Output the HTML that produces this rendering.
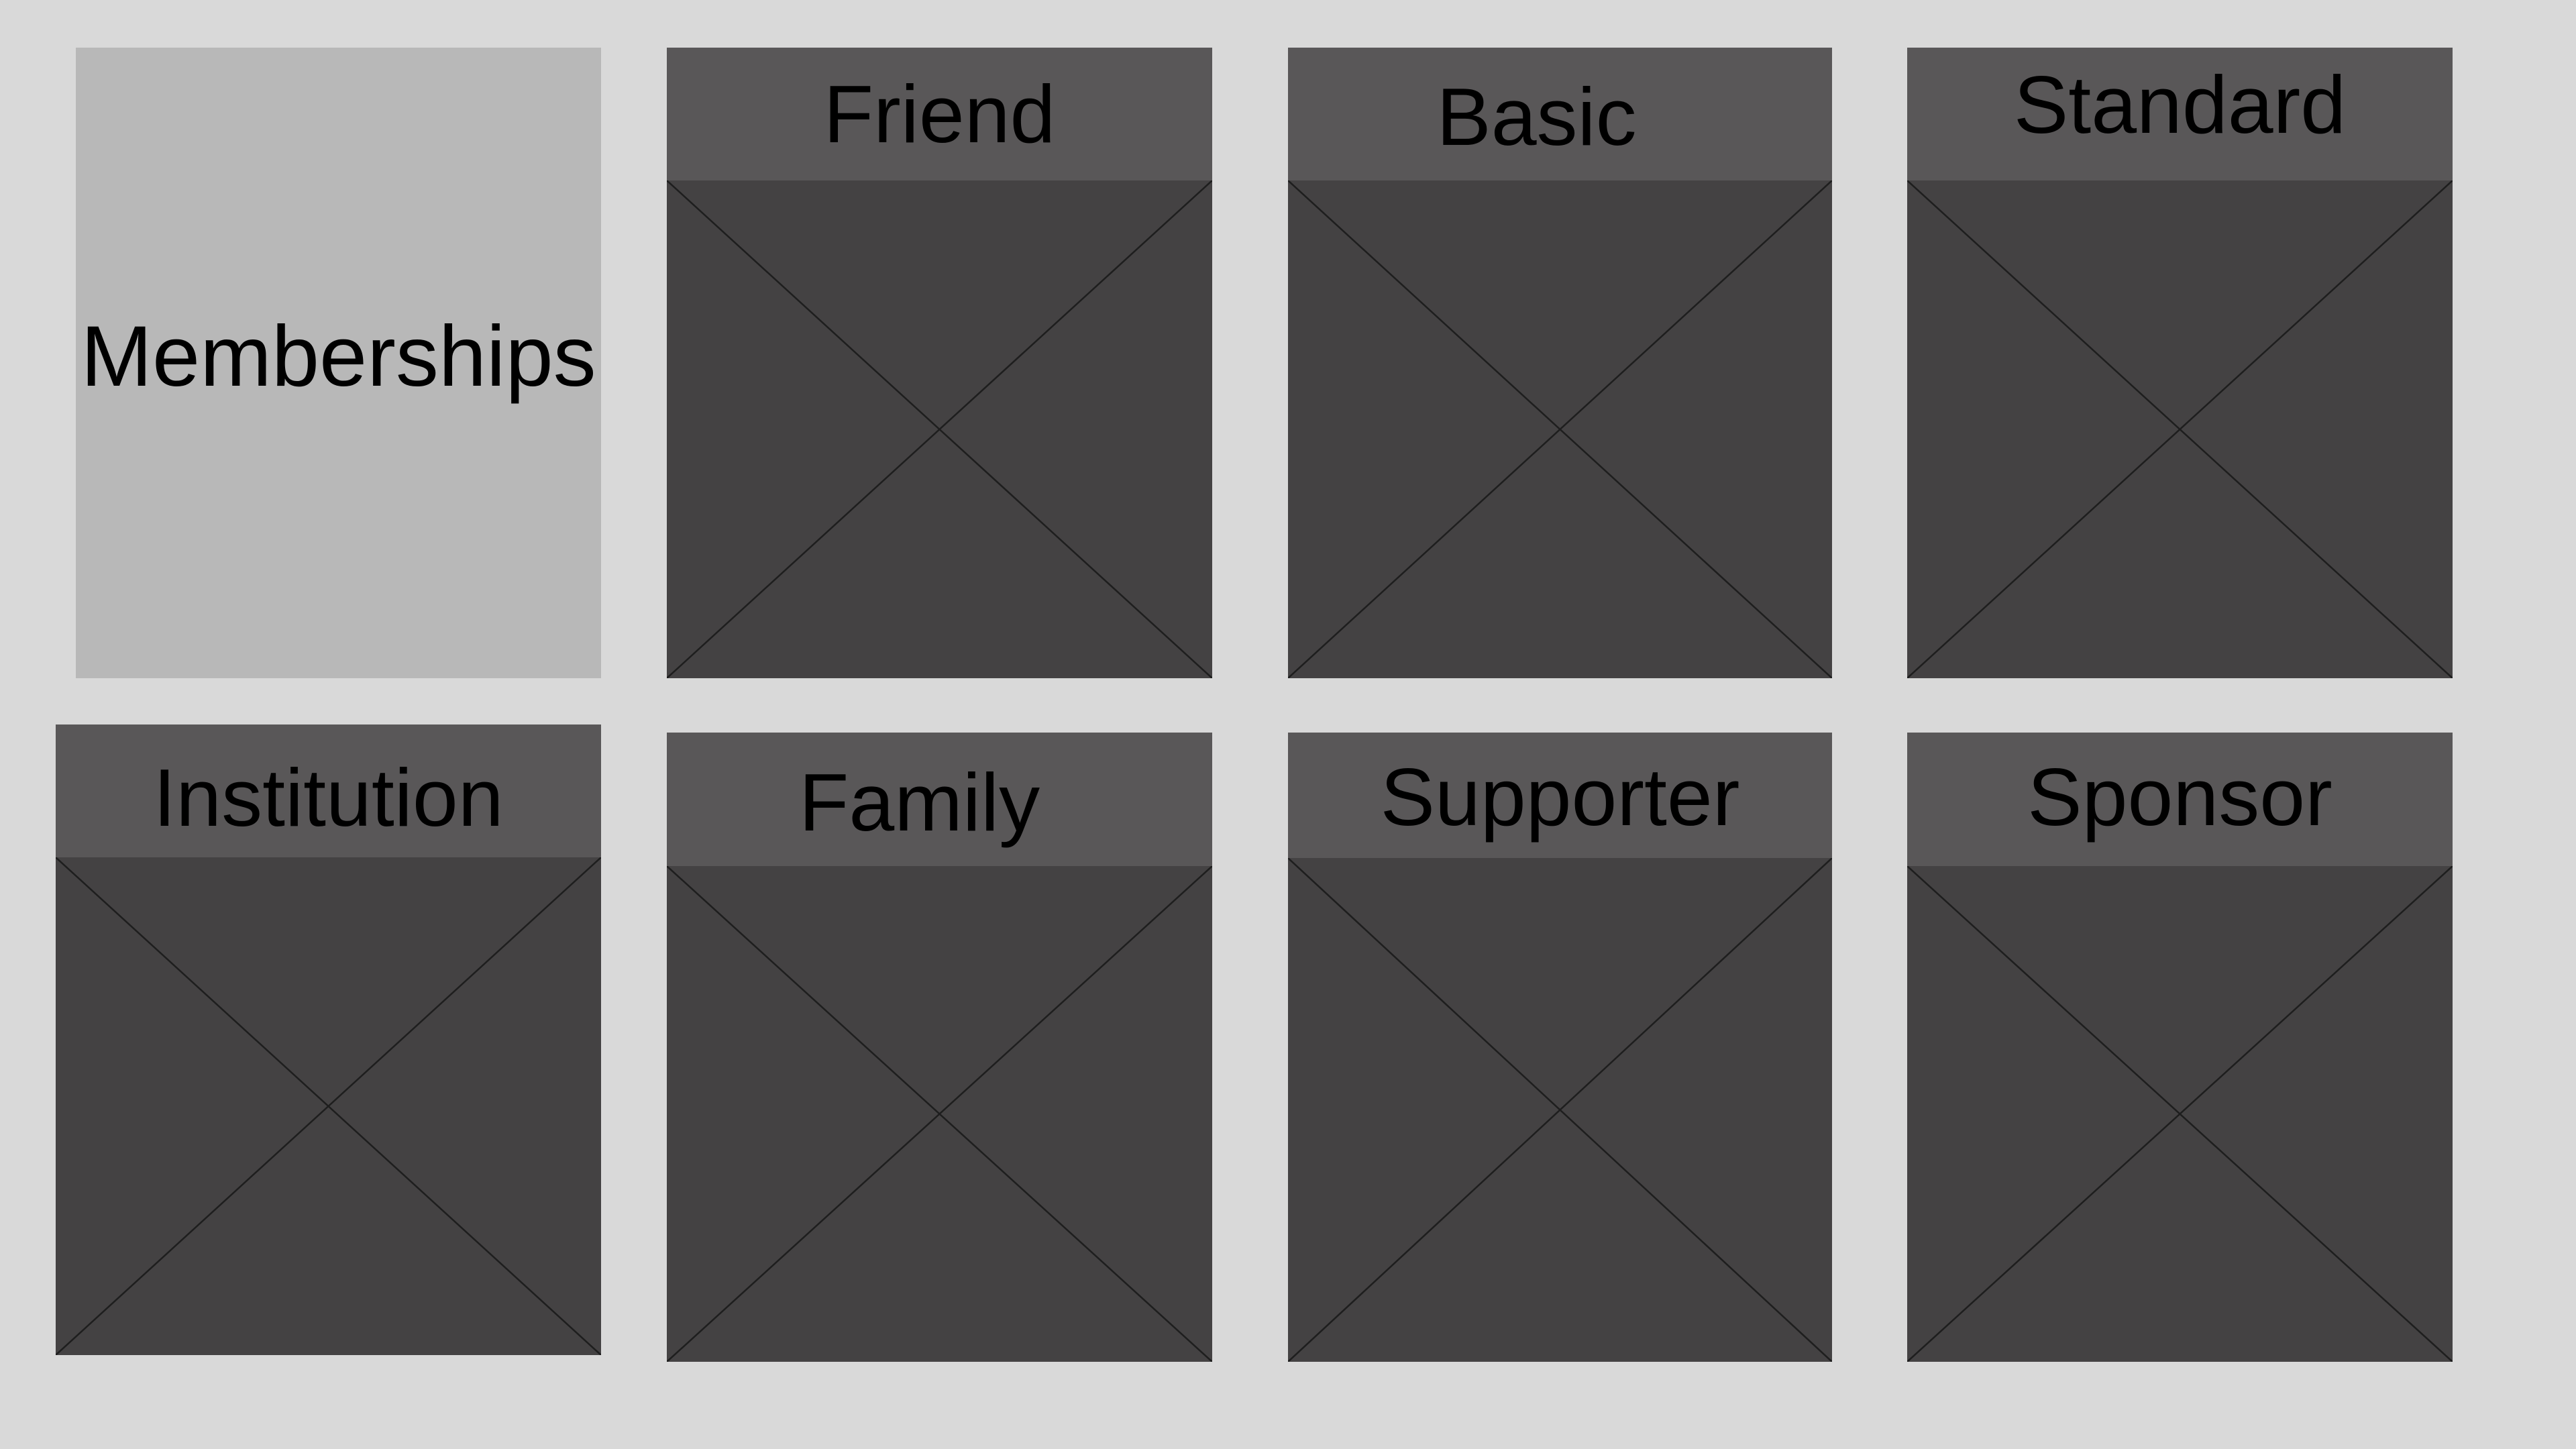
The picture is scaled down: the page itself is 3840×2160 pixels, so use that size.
<!DOCTYPE html>
<html><head><meta charset="utf-8"><style>
html,body{margin:0;padding:0}
body{width:3840px;height:2160px;background:#d9d9d9;position:relative;overflow:hidden;font-family:"Liberation Sans",sans-serif}
.b{position:absolute;background:#444243}
.h{position:absolute;left:0;top:0;width:100%;background:#595758;color:#000;text-align:center;font-size:122px;box-sizing:border-box}
svg{position:absolute;left:0;width:100%}
.m{position:absolute;left:113px;top:71px;width:783px;height:920px;padding-bottom:20px;background:#b8b8b8;display:flex;align-items:center;justify-content:center;font-size:128px;color:#000}
</style></head><body>
<div class="m">Memberships</div>

<div class="b" style="left:994px;top:71px;width:813px;height:940px">
<div class="h" style="height:198px;line-height:198px">Friend</div>
<svg style="top:198px;height:742px" viewBox="0 0 100 100" preserveAspectRatio="none"><path d="M0 0L100 100M100 0L0 100" stroke="#1e1e1e" stroke-width="2.5" vector-effect="non-scaling-stroke" fill="none"/></svg></div>

<div class="b" style="left:1920px;top:71px;width:811px;height:940px">
<div class="h" style="height:198px;line-height:206px;padding-right:70px">Basic</div>
<svg style="top:198px;height:742px" viewBox="0 0 100 100" preserveAspectRatio="none"><path d="M0 0L100 100M100 0L0 100" stroke="#1e1e1e" stroke-width="2.5" vector-effect="non-scaling-stroke" fill="none"/></svg></div>

<div class="b" style="left:2843px;top:71px;width:813px;height:940px">
<div class="h" style="height:198px;line-height:170px">Standard</div>
<svg style="top:198px;height:742px" viewBox="0 0 100 100" preserveAspectRatio="none"><path d="M0 0L100 100M100 0L0 100" stroke="#1e1e1e" stroke-width="2.5" vector-effect="non-scaling-stroke" fill="none"/></svg></div>

<div class="b" style="left:83px;top:1080px;width:813px;height:940px">
<div class="h" style="height:198px;line-height:218px">Institution</div>
<svg style="top:198px;height:742px" viewBox="0 0 100 100" preserveAspectRatio="none"><path d="M0 0L100 100M100 0L0 100" stroke="#1e1e1e" stroke-width="2.5" vector-effect="non-scaling-stroke" fill="none"/></svg></div>

<div class="b" style="left:994px;top:1092px;width:813px;height:938px">
<div class="h" style="height:199px;line-height:208px;padding-right:60px">Family</div>
<svg style="top:199px;height:739px" viewBox="0 0 100 100" preserveAspectRatio="none"><path d="M0 0L100 100M100 0L0 100" stroke="#1e1e1e" stroke-width="2.5" vector-effect="non-scaling-stroke" fill="none"/></svg></div>

<div class="b" style="left:1920px;top:1092px;width:811px;height:938px">
<div class="h" style="height:187px;line-height:192px">Supporter</div>
<svg style="top:187px;height:751px" viewBox="0 0 100 100" preserveAspectRatio="none"><path d="M0 0L100 100M100 0L0 100" stroke="#1e1e1e" stroke-width="2.5" vector-effect="non-scaling-stroke" fill="none"/></svg></div>

<div class="b" style="left:2843px;top:1092px;width:813px;height:938px">
<div class="h" style="height:199px;line-height:192px">Sponsor</div>
<svg style="top:199px;height:739px" viewBox="0 0 100 100" preserveAspectRatio="none"><path d="M0 0L100 100M100 0L0 100" stroke="#1e1e1e" stroke-width="2.5" vector-effect="non-scaling-stroke" fill="none"/></svg></div>
</body></html>
